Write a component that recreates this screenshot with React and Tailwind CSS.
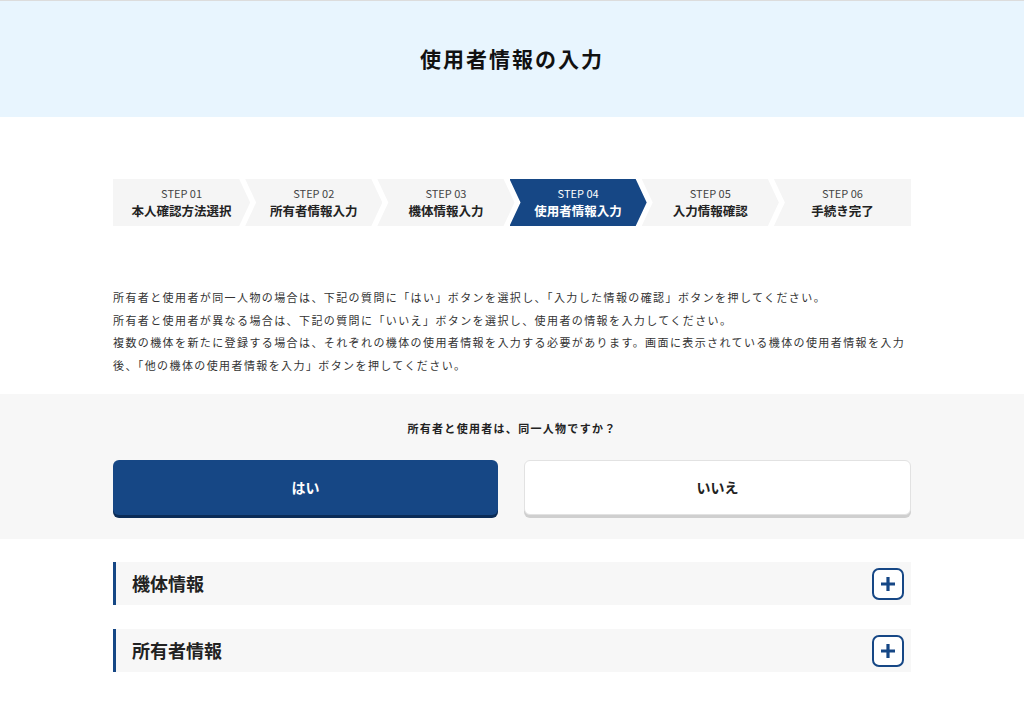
import React from "react";

const steps = [
    { no: "STEP 01", label: "本人確認方法選択" },
    { no: "STEP 02", label: "所有者情報入力" },
    { no: "STEP 03", label: "機体情報入力" },
    { no: "STEP 04", label: "使用者情報入力", active: true },
    { no: "STEP 05", label: "入力情報確認" },
    { no: "STEP 06", label: "手続き完了" },
];

const clipFirst = "[clip-path:polygon(0_0,calc(100%-11px)_0,100%_50%,calc(100%-11px)_100%,0_100%)]";
const clipMid = "[clip-path:polygon(0_0,calc(100%-11px)_0,100%_50%,calc(100%-11px)_100%,0_100%,11px_50%)]";
const clipLast = "[clip-path:polygon(0_0,100%_0,100%_100%,0_100%,11px_50%)]";

const StepBar = () => {
    return (
        <div className="flex w-full h-[47px]">
            {steps.map((s, i) => {
                const clip = i === 0 ? clipFirst : i === steps.length - 1 ? clipLast : clipMid;
                return (
                    <div
                        key={s.no}
                        className={`flex-1 flex flex-col items-center justify-center ${i > 0 ? "-ml-[5px]" : ""} ${clip} ${
                            s.active ? "bg-[#164785] text-white" : "bg-[#f5f5f5] text-[#222]"
                        }`}
                    >
                        <div className={`text-[11px] leading-[14px] ${s.active ? "text-white" : "text-[#444]"}`}>{s.no}</div>
                        <div className="text-[12.5px] leading-[18px] font-bold mt-[2px]">{s.label}</div>
                    </div>
                );
            })}
        </div>
    );
};

const PlusIcon = () => (
    <div className="size-[32px] rounded-[7px] border-2 border-[#164785] bg-white flex items-center justify-center">
        <svg width="18" height="18" viewBox="0 0 18 18">
            <path d="M9 2v14M2 9h14" stroke="#164785" strokeWidth="3.2" />
        </svg>
    </div>
);

const AccordionRow = ({ title }) => (
    <div className="flex items-center justify-between h-[43px] bg-[#f7f7f7] border-l-[3px] border-[#164785] pl-[16px] pr-[7px]">
        <div className="text-[18px] font-bold text-[#222]">{title}</div>
        <PlusIcon />
    </div>
);

export default function App() {
    return (
        <div className="min-h-[705px] bg-white text-[#333] font-['Noto_Sans_CJK_JP','Noto_Sans',sans-serif]">
            <header className="h-[117px] bg-[#e8f5fe] border-t border-[#dcdcdc] flex items-center justify-center">
                <h1 className="text-[21px] font-bold text-[#111] tracking-[2px]">使用者情報の入力</h1>
            </header>

            <div className="w-[798px] mx-auto pt-[62px]">
                <StepBar />
                <div className="mt-[60px] text-[11px] leading-[22.5px] tracking-[1.4px] text-[#333] pb-[18px]">
                    <p>所有者と使用者が同一人物の場合は、下記の質問に「はい」ボタンを選択し、「入力した情報の確認」ボタンを押してください。</p>
                    <p>所有者と使用者が異なる場合は、下記の質問に「いいえ」ボタンを選択し、使用者の情報を入力してください。</p>
                    <p>複数の機体を新たに登録する場合は、それぞれの機体の使用者情報を入力する必要があります。画面に表示されている機体の使用者情報を入力後、「他の機体の使用者情報を入力」ボタンを押してください。</p>
                </div>
            </div>

            <section className="bg-[#f7f7f7] h-[145px]">
                <div className="w-[798px] mx-auto pt-[24px]">
                    <div className="text-center text-[11px] font-bold text-[#222] leading-[20px] tracking-[1.3px]">所有者と使用者は、同一人物ですか？</div>
                    <div className="flex gap-[26px] mt-[22px]">
                        <button className="flex-1 h-[55px] rounded-[6px] bg-[#164785] text-white text-[14px] font-bold shadow-[0_3px_0_#0b2c57]">
                            はい
                        </button>
                        <button className="flex-1 h-[55px] rounded-[6px] bg-white border border-[#e2e2e2] text-[#222] text-[14px] font-bold shadow-[0_3px_0_#cfcfcf]">
                            いいえ
                        </button>
                    </div>
                </div>
            </section>

            <div className="w-[798px] mx-auto pt-[23px] flex flex-col gap-[24px] pb-[30px]">
                <AccordionRow title="機体情報" />
                <AccordionRow title="所有者情報" />
            </div>
        </div>
    );
}
